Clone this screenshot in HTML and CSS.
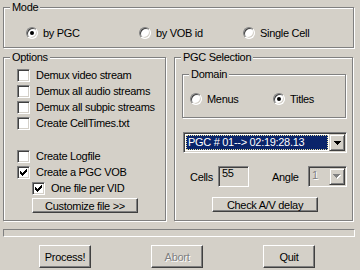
FILE: index.html
```html
<!DOCTYPE html>
<html lang="en">
<head>
    <meta charset="UTF-8">
    <meta name="viewport" content="width=device-width, initial-scale=1.0">
    <title>PgcDemux</title>
    <link rel="stylesheet" href="styles.css">
</head>
<body>
    <div class="dialog">
        <fieldset class="group mode">
            <legend>Mode</legend>
            <div class="mode-row">
                <label class="choice"><span class="radio on"></span>by PGC</label>
                <label class="choice"><span class="radio"></span>by VOB id</label>
                <label class="choice"><span class="radio"></span>Single Cell</label>
            </div>
        </fieldset>

        <div class="columns">
            <fieldset class="group options">
                <legend>Options</legend>
                <div class="checks">
                    <label class="opt"><span class="box"></span>Demux video stream</label>
                    <label class="opt"><span class="box"></span>Demux all audio streams</label>
                    <label class="opt"><span class="box"></span>Demux all subpic streams</label>
                    <label class="opt"><span class="box"></span>Create CellTimes.txt</label>
                </div>
                <div class="checks lower">
                    <label class="opt"><span class="box"></span>Create Logfile</label>
                    <label class="opt">
                        <span class="box"><svg width="7" height="7" viewBox="0 0 7 7"><path d="M6 0h1v1h-1z M5 1h2v1h-2z M0 2h1v1h-1z M4 2h3v1h-3z M0 3h2v1h-2z M3 3h3v1h-3z M0 4h5v1h-5z M1 5h3v1h-3z M2 6h1v1h-1z" fill="#000"/></svg></span>Create a PGC VOB
                    </label>
                    <label class="opt sub">
                        <span class="box"><svg width="7" height="7" viewBox="0 0 7 7"><path d="M6 0h1v1h-1z M5 1h2v1h-2z M0 2h1v1h-1z M4 2h3v1h-3z M0 3h2v1h-2z M3 3h3v1h-3z M0 4h5v1h-5z M1 5h3v1h-3z M2 6h1v1h-1z" fill="#000"/></svg></span>One file per VID
                    </label>
                    <button class="btn wide customize">Customize file &gt;&gt;</button>
                </div>
            </fieldset>

            <fieldset class="group pgc">
                <legend>PGC Selection</legend>
                <fieldset class="group domain">
                    <legend>Domain</legend>
                    <div class="domain-row">
                        <label class="choice"><span class="radio"></span>Menus</label>
                        <label class="choice"><span class="radio on"></span>Titles</label>
                    </div>
                </fieldset>

                <div class="combo pgc-list">
                    <span class="selected">PGC # 01--&gt; 02:19:28.13</span>
                    <span class="arrow"><svg width="7" height="4" viewBox="0 0 7 4"><path d="M0 0h7v1h-7z M1 1h5v1h-5z M2 2h3v1h-3z M3 3h1v1h-1z" fill="#000"/></svg></span>
                </div>

                <div class="cells-row">
                    <span class="cells-label">Cells</span>
                    <span class="edit">55</span>
                    <span class="angle-label">Angle</span>
                    <div class="combo angle-combo">
                        <span class="value">1</span>
                        <span class="arrow"><svg width="8" height="5" viewBox="0 0 8 5"><path d="M1 1h7v1h-7z M2 2h5v1h-5z M3 3h3v1h-3z M4 4h1v1h-1z" fill="#fff"/><path d="M0 0h7v1h-7z M1 1h5v1h-5z M2 2h3v1h-3z M3 3h1v1h-1z" fill="#808080"/></svg></span>
                    </div>
                </div>

                <button class="btn wide delay">Check A/V delay</button>
            </fieldset>
        </div>

        <div class="progress"></div>

        <div class="actions">
            <button class="btn">Process!</button>
            <button class="btn" disabled>Abort</button>
            <button class="btn">Quit</button>
        </div>
    </div>
</body>
</html>
```

FILE: styles.css
```css
* {
    box-sizing: border-box;
}

body {
    margin: 0;
    background: #d4d0c8;
    font-family: "Liberation Sans", Arial, sans-serif;
    font-size: 11px;
    letter-spacing: -0.3px;
    color: #000;
}

.dialog {
    width: 360px;
    height: 270px;
    padding: 1px 0 0 3px;
    overflow: hidden;
}

/* etched group boxes */
.group {
    margin: 0;
    padding: 0;
    min-width: 0;
    border: 1px solid #808080;
    box-shadow: inset 1px 1px #fff, 1px 1px #fff;
}

.group legend {
    margin-left: 6px;
    padding: 0 2px;
    line-height: 13px;
    background: #d4d0c8;
}

.mode {
    width: 351px;
    height: 47px;
}

.mode-row {
    display: grid;
    grid-template-columns: 113px 104px auto;
    padding: 11px 0 0 22px;
}

.columns {
    display: flex;
    gap: 8px;
    margin-top: 3px;
}

.options {
    width: 163px;
    height: 170px;
}

.pgc {
    width: 179px;
    height: 170px;
}

/* radios and checkboxes */
.choice,
.opt {
    display: flex;
    align-items: center;
    height: 16px;
    white-space: nowrap;
}

.choice {
    gap: 5px;
}

.opt {
    gap: 6px;
}

.radio {
    width: 12px;
    height: 12px;
    flex: none;
    display: flex;
    align-items: center;
    justify-content: center;
    border-radius: 50%;
    background: #fff;
    border: 1px solid;
    border-color: #808080 #fff #fff #808080;
    box-shadow: inset 1px 1px #404040, inset -1px -1px #d4d0c8;
}

.radio.on::after {
    content: "";
    width: 4px;
    height: 4px;
    border-radius: 50%;
    background: #000;
}

.box {
    width: 13px;
    height: 13px;
    flex: none;
    display: flex;
    align-items: center;
    justify-content: center;
    background: #fff;
    border: 1px solid;
    border-color: #808080 #fff #fff #808080;
    box-shadow: inset 1px 1px #404040, inset -1px -1px #d4d0c8;
}

.checks {
    padding: 3px 0 0 13px;
}

.checks.lower {
    padding-top: 17px;
}

.sub {
    margin-left: 15px;
}

/* buttons */
.btn {
    width: 52px;
    height: 23px;
    padding: 0;
    font: inherit;
    letter-spacing: inherit;
    color: #000;
    background: #d4d0c8;
    border: 1px solid;
    border-color: #fff #404040 #404040 #fff;
    box-shadow: inset -1px -1px #808080;
}

.btn:disabled {
    color: #808080;
    text-shadow: 1px 1px #fff;
}

.btn.wide {
    width: 106px;
    height: 15px;
    display: block;
}

.customize {
    margin: 2px 0 0 15px;
}

.delay {
    margin: 10px 0 0 37px;
}

/* PGC selection */
.domain {
    width: 164px;
    height: 50px;
    margin: 4px 0 0 7px;
}

.domain-row {
    display: grid;
    grid-template-columns: 83px auto;
    padding: 10px 0 0 7px;
}

.combo {
    display: flex;
    height: 21px;
    padding: 1px;
    background: #fff;
    border: 1px solid;
    border-color: #808080 #fff #fff #808080;
    box-shadow: inset 1px 1px #404040, inset -1px -1px #d4d0c8;
}

.pgc-list {
    width: 164px;
    margin: 14px 0 0 8px;
}

.selected {
    flex: 1;
    margin: 1px;
    padding-left: 1px;
    line-height: 13px;
    color: #fff;
    background: #0a246a;
    border: 1px dotted #e8e0a0;
    white-space: nowrap;
    overflow: hidden;
}

.arrow {
    width: 16px;
    flex: none;
    display: flex;
    align-items: center;
    justify-content: center;
    background: #d4d0c8;
    border: 1px solid;
    border-color: #d4d0c8 #404040 #404040 #d4d0c8;
    box-shadow: inset 1px 1px #fff, inset -1px -1px #808080;
}

.cells-row {
    display: flex;
    align-items: center;
    height: 21px;
    margin-top: 13px;
    padding-left: 15px;
}

.cells-label {
    width: 28px;
}

.edit {
    width: 31px;
    height: 21px;
    padding: 0 3px;
    line-height: 13px;
    border: 1px solid;
    border-color: #808080 #fff #fff #808080;
    box-shadow: inset 1px 1px #404040, inset -1px -1px #d4d0c8;
}

.angle-label {
    width: 36px;
    margin-left: 23px;
}

.angle-combo {
    width: 39px;
    background: #d4d0c8;
}

.angle-combo .value {
    flex: 1;
    padding: 1px 0 0 2px;
    line-height: 13px;
    color: #808080;
    text-shadow: 1px 1px #fff;
}

.progress {
    width: 352px;
    height: 8px;
    margin-top: 8px;
    border: 1px solid;
    border-color: #808080 #fff #fff #808080;
}

.actions {
    display: flex;
    gap: 60px;
    margin: 8px 0 0 36px;
}
```
